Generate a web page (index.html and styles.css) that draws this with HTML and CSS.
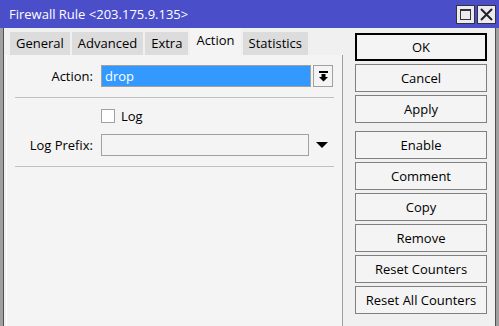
FILE: index.html
```html
<!DOCTYPE html>
<html lang="en">
<head>
    <meta charset="UTF-8">
    <title>Firewall Rule</title>
    <link rel="stylesheet" href="styles.css">
</head>
<body>
    <div class="window">
        <div class="titlebar">
            <span class="title">Firewall Rule &lt;203.175.9.135&gt;</span>
            <div class="title-buttons">
                <span class="tbtn"><span class="maxbox"></span></span>
                <span class="tbtn">
                    <svg width="13" height="13" viewBox="0 0 13 13"><path d="M1 1L12 12M12 1L1 12" stroke="#222" stroke-width="2"/></svg>
                </span>
            </div>
        </div>

        <div class="body">
            <!-- tabs and form -->
            <div class="left">
                <div class="tabs">
                    <div class="tab">General</div>
                    <div class="tab">Advanced</div>
                    <div class="tab">Extra</div>
                    <div class="tab active">Action</div>
                    <div class="tab">Statistics</div>
                </div>
                <div class="panel">
                    <div class="row">
                        <label>Action:</label>
                        <div class="field">
                            <div class="select">drop</div>
                            <div class="drop-btn">
                                <svg width="11" height="11" viewBox="0 0 11 11"><rect x="1" y="0" width="9" height="2" fill="#000"/><path d="M3.5 3H7.5V6H10L5.5 10.5L1 6H3.5Z" fill="#000"/></svg>
                            </div>
                        </div>
                    </div>
                    <div class="sep"></div>
                    <div class="row check-row">
                        <span></span>
                        <div class="field"><span class="checkbox"></span><span>Log</span></div>
                    </div>
                    <div class="row">
                        <label>Log Prefix:</label>
                        <div class="field">
                            <div class="input"></div>
                            <div class="tri">
                                <svg width="12" height="6" viewBox="0 0 12 6"><path d="M0 0H12L6 6Z" fill="#000"/></svg>
                            </div>
                        </div>
                    </div>
                    <div class="sep"></div>
                </div>
            </div>

            <!-- buttons -->
            <div class="buttons">
                <div class="btn ok">OK</div>
                <div class="btn">Cancel</div>
                <div class="btn">Apply</div>
                <div class="btn group">Enable</div>
                <div class="btn">Comment</div>
                <div class="btn">Copy</div>
                <div class="btn">Remove</div>
                <div class="btn">Reset Counters</div>
                <div class="btn">Reset All Counters</div>
            </div>
        </div>
    </div>
</body>
</html>
```

FILE: styles.css
```css
/* General */
body {
    margin: 0;
    font-family: 'Open Sans', 'Liberation Sans', sans-serif;
    font-size: 12px;
    color: #000;
    background: #f0f0f0;
}

.window {
    width: 499px;
    height: 326px;
    display: flex;
    flex-direction: column;
    overflow: hidden;
}

.titlebar {
    height: 28px;
    background: #4a4ec9;
    color: white;
    display: flex;
    align-items: center;
    justify-content: space-between;
    padding: 0 3px 0 9px;
    flex-shrink: 0;
}

.title {
    font-size: 13px;
}

.title-buttons {
    display: flex;
    gap: 2px;
}

.tbtn {
    width: 17px;
    height: 17px;
    border: 1px solid #333;
    background: #eceaf0;
    display: flex;
    align-items: center;
    justify-content: center;
}

.maxbox {
    width: 11px;
    height: 11px;
    border: 1px solid #333;
    border-top-width: 2px;
    box-sizing: border-box;
}

.body {
    flex: 1;
    display: flex;
    border-left: 3px solid #a0a0a0;
    border-right: 3px solid #a0a0a0;
    box-shadow: inset 1px 0 0 #505050, inset -1px 0 0 #505050;
}

/* Left side: tabs */
.left {
    width: 337px;
    padding-left: 3px;
    display: flex;
    flex-direction: column;
}

.tabs {
    display: flex;
    gap: 2px;
    padding: 4px 0 0 4px;
    height: 23px;
    align-items: flex-end;
}

.tab {
    height: 23px;
    line-height: 23px;
    padding: 0 6px;
    background: #dcdcdc;
    font-size: 13px;
}

.tab.active {
    background: #f4f4f4;
    height: 27px;
    line-height: 25px;
}

.panel {
    flex: 1;
    background: #f4f4f4;
    border-left: 1px solid #fff;
    border-right: 1px solid #a0a0a0;
    padding: 10px 8px 0 8px;
}

.row {
    display: grid;
    grid-template-columns: 78px 232px;
    column-gap: 8px;
    align-items: center;
    height: 22px;
}

.row label {
    text-align: right;
    font-size: 13px;
}

.field {
    display: flex;
    align-items: center;
    gap: 2px;
    height: 22px;
}

.select {
    width: 210px;
    height: 22px;
    box-sizing: border-box;
    border: 1px solid #a0a0a0;
    background: #3399ff;
    color: white;
    padding-left: 3px;
    line-height: 20px;
    font-size: 13px;
}

.drop-btn {
    width: 20px;
    height: 22px;
    box-sizing: border-box;
    border: 1px solid #a0a0a0;
    display: flex;
    align-items: center;
    justify-content: center;
    background: #f4f4f4;
}

.sep {
    height: 1px;
    background: #c0c0c0;
    margin: 10px 0 11px 0;
}

.check-row {
    height: 14px;
    margin-bottom: 11px;
}

.check-row .field {
    height: 14px;
    gap: 6px;
    font-size: 13px;
}

.checkbox {
    width: 14px;
    height: 14px;
    box-sizing: border-box;
    border: 1px solid #a0a0a0;
    background: #fff;
}

.input {
    width: 210px;
    height: 22px;
    box-sizing: border-box;
    border: 1px solid #a0a0a0;
    background: #f4f4f4;
}

.tri {
    width: 22px;
    display: flex;
    justify-content: center;
}

/* Right side: buttons */
.buttons {
    flex: 1;
    padding: 5px 0 0 12px;
    display: flex;
    flex-direction: column;
    gap: 3px;
}

.btn {
    width: 132px;
    height: 28px;
    box-sizing: border-box;
    border: 1px solid #808080;
    background: #f4f4f4;
    display: flex;
    align-items: center;
    justify-content: center;
    font-size: 13px;
}

.btn.ok {
    border: 2px solid #000;
}

.btn.group {
    margin-top: 5px;
}
```
